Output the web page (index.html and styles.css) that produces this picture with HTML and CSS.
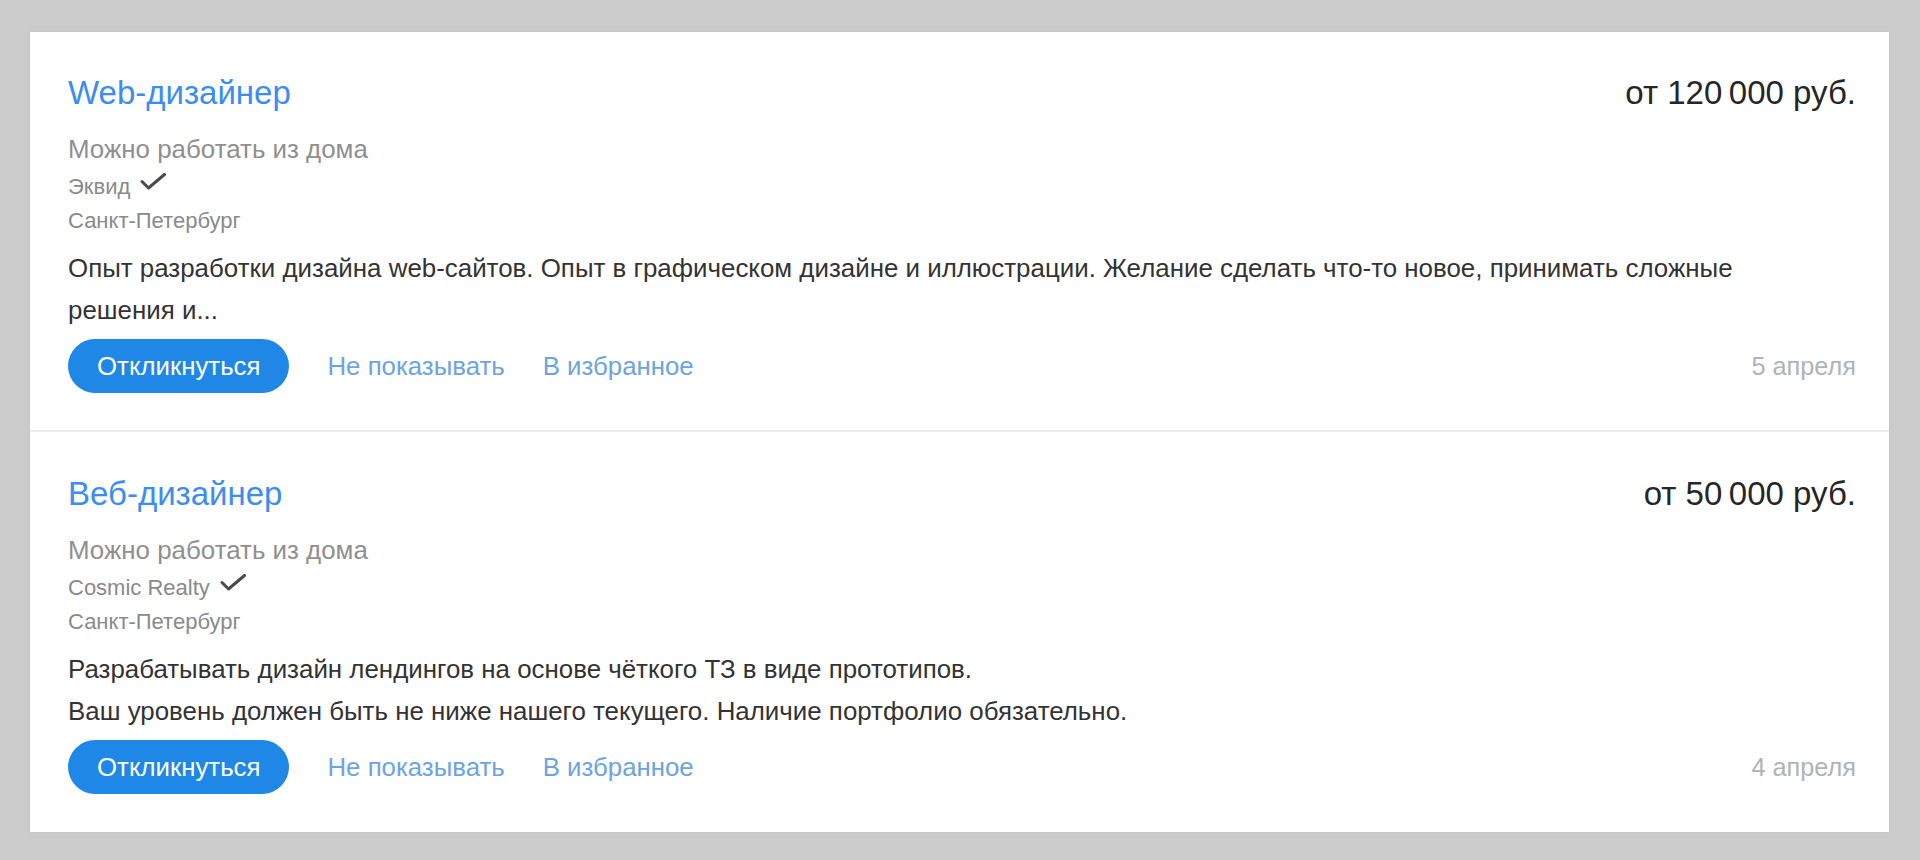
FILE: index.html
```html
<!DOCTYPE html>
<html lang="ru">
<head>
<meta charset="utf-8">
<title>Вакансии</title>
<link rel="stylesheet" href="styles.css">
</head>
<body>
<div class="card">
  <div class="vacancy">
    <div class="vacancy-head">
      <a class="vacancy-title" href="#">Web-дизайнер</a>
      <div class="salary">от 120&#8201;000 руб.</div>
    </div>
    <div class="remote">Можно работать из дома</div>
    <div class="company">
      <span>Эквид</span>
      <svg class="check" viewBox="0 0 26 17" width="26" height="17"><path d="M2 8.5 L8.5 15 L24.5 1.5" fill="none" stroke="#4a4a4a" stroke-width="3" stroke-linecap="round" stroke-linejoin="round"/></svg>
    </div>
    <div class="city">Санкт-Петербург</div>
    <p class="desc">Опыт разработки дизайна web-сайтов. Опыт в графическом дизайне и иллюстрации. Желание сделать что-то новое, принимать сложные<br>решения и...</p>
    <div class="actions">
      <button class="btn-respond">Откликнуться</button>
      <a class="link" href="#">Не показывать</a>
      <a class="link" href="#">В избранное</a>
      <span class="date">5 апреля</span>
    </div>
  </div>
  <div class="vacancy">
    <div class="vacancy-head">
      <a class="vacancy-title" href="#">Веб-дизайнер</a>
      <div class="salary">от 50&#8201;000 руб.</div>
    </div>
    <div class="remote">Можно работать из дома</div>
    <div class="company">
      <span>Cosmic Realty</span>
      <svg class="check" viewBox="0 0 26 17" width="26" height="17"><path d="M2 8.5 L8.5 15 L24.5 1.5" fill="none" stroke="#4a4a4a" stroke-width="3" stroke-linecap="round" stroke-linejoin="round"/></svg>
    </div>
    <div class="city">Санкт-Петербург</div>
    <p class="desc">Разрабатывать дизайн лендингов на основе чёткого ТЗ в виде прототипов.<br>Ваш уровень должен быть не ниже нашего текущего. Наличие портфолио обязательно.</p>
    <div class="actions">
      <button class="btn-respond">Откликнуться</button>
      <a class="link" href="#">Не показывать</a>
      <a class="link" href="#">В избранное</a>
      <span class="date">4 апреля</span>
    </div>
  </div>
</div>
</body>
</html>
```

FILE: styles.css
```css
* { box-sizing: border-box; }

html, body {
  margin: 0;
  padding: 0;
  background: #cbcbcb;
  height: 860px;
  overflow: hidden;
}

body {
  font-family: "Liberation Sans", Arial, sans-serif;
  padding: 32px 31px 0 30px;
}

.card {
  background: #ffffff;
  box-shadow: 0 0 2px rgba(0, 0, 0, 0.08);
}

.vacancy {
  padding: 41px 33px 37px 38px;
}

.vacancy + .vacancy {
  padding-top: 42px;
  padding-bottom: 38px;
  border-top: 2px solid #ececec;
}

.vacancy-head {
  display: flex;
  justify-content: space-between;
  align-items: center;
  height: 40px;
}

.vacancy-title {
  font-size: 33px;
  line-height: 40px;
  color: #3c8df2;
  text-decoration: none;
}

.salary {
  font-size: 33px;
  line-height: 40px;
  color: #262626;
}

.remote {
  margin-top: 19px;
  font-size: 25.9px;
  line-height: 34px;
  color: #8f8f8f;
}

.company {
  margin-top: 4px;
  display: flex;
  align-items: flex-start;
  gap: 10px;
  font-size: 22px;
  line-height: 34px;
  color: #8a8a8a;
}

.check {
  margin-top: 3px;
  flex: none;
}

.city {
  font-size: 22px;
  line-height: 34px;
  color: #8a8a8a;
}

.desc {
  margin: 9px 0 0;
  font-size: 25.9px;
  line-height: 42px;
  color: #333333;
}

.actions {
  margin-top: 8px;
  display: flex;
  align-items: center;
  gap: 38px;
}

.btn-respond {
  height: 54px;
  padding: 0 29px;
  border: none;
  border-radius: 27px;
  background: #1f87e6;
  color: #ffffff;
  font-family: "Liberation Sans", Arial, sans-serif;
  font-size: 25.8px;
  cursor: pointer;
}

.link {
  font-size: 25.8px;
  color: #6ea3e2;
  text-decoration: none;
}

.date {
  margin-left: auto;
  font-size: 25.3px;
  color: #aeb3b9;
}
```
